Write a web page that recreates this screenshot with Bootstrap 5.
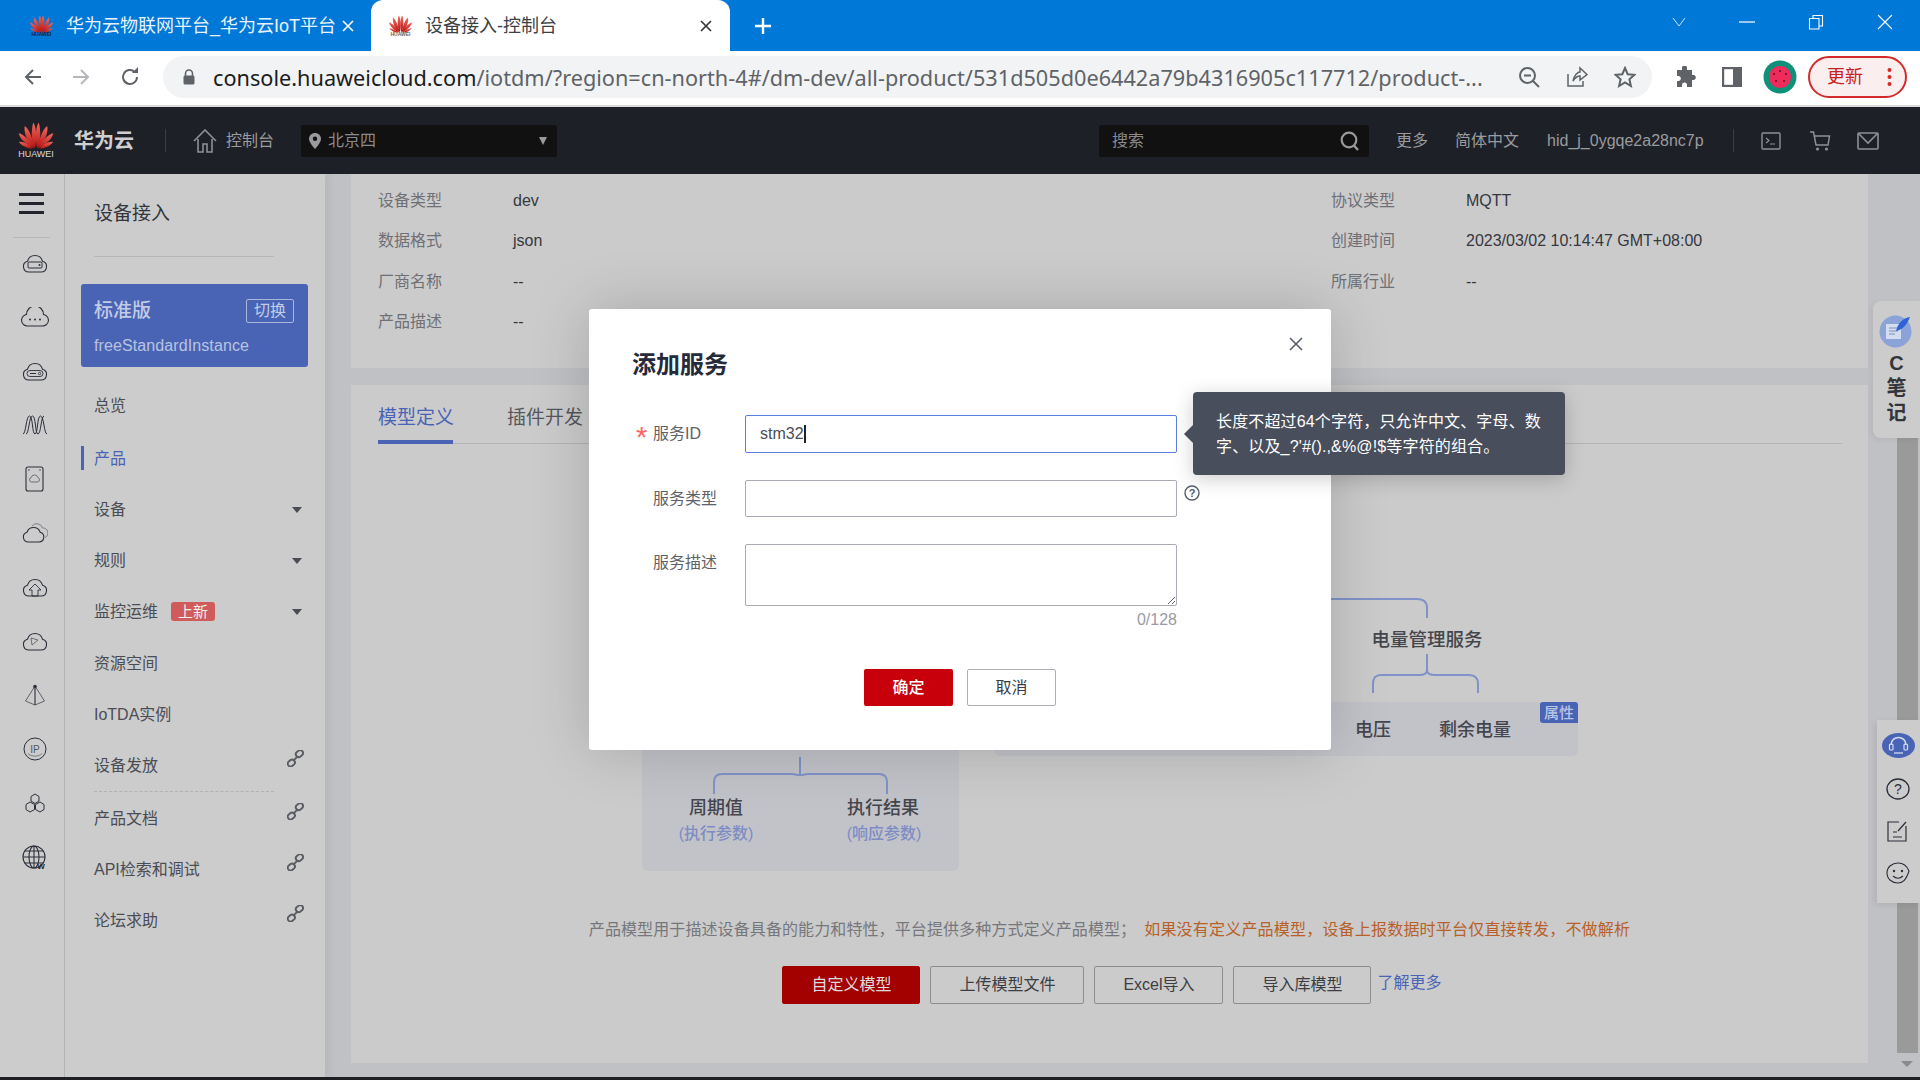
<!DOCTYPE html>
<html lang="zh-CN">
<head>
<meta charset="utf-8">
<title>设备接入-控制台</title>
<link href="https://cdn.jsdelivr.net/npm/bootstrap@5.3.0/dist/css/bootstrap.min.css" rel="stylesheet">
<style>
html,body{height:1080px;width:1920px;overflow:hidden;margin:0}
body{position:relative;font-family:"Liberation Sans","Noto Sans CJK SC",sans-serif;font-size:16px;color:#4b4d55;background:#c0c1c5}
svg{display:block;flex:none}
.tabstrip{height:51px;background:#0078d7;color:#fff;font-size:18px}
.btab{height:51px;display:flex;align-items:center;position:relative}
.btab-a{width:371px;padding-left:29px;color:#e8f2fb}
.btab-b{width:359px;padding-left:17px;background:#fff;color:#3c4043;border-radius:12px 12px 0 0}
.btab-t{margin-left:12px;white-space:nowrap;padding-top:2px}
.btab-a .btab-t{width:268px}
.btab-b .btab-t{width:271px}
.fav{display:flex;flex-direction:column;align-items:center;width:25px}
.fav-t{font-size:5px;line-height:5px;font-weight:700;color:#666;margin-top:-1px}
.btab-a .fav-t{color:#223}
.plus{margin-left:24px}
.winctl{margin-left:auto;padding-right:27px;gap:53px;padding-bottom:8px}
.toolbar{height:56px;background:#fff;border-bottom:2px solid #dcdcdc;padding:6px 12px 8px 24px;flex:none}
.omni{width:1489px;margin-left:23px;height:42px;background:#f1f3f4;border-radius:21px;padding:0 16px 0 19px;font-family:"Noto Sans",sans-serif;font-size:21.7px;color:#5f6368;white-space:nowrap}
.omni b{font-weight:400;color:#1c1c1c}
.url{margin-left:17px;width:1300px;flex:none;padding-top:2px}
.update{width:99px;height:42px;border:2px solid #d52a2a;border-radius:21px;background:#fbeeee;color:#c5221f;font-size:18px;padding:0 13px 0 17px}
.topbar{height:67px;background:#1e2027;color:#9a9b9f;flex:none;padding-left:18px}
.brand{font-size:20px;font-weight:700;color:#cfcfcf;margin-left:20px}
.hlogo{width:36px;color:#ddd;font-size:9px;line-height:10px;text-align:center}
.vsep{width:1px;height:23px;background:#3b3d44}
.selbox{width:256px;height:32px;background:#111;border-radius:2px;padding:0 10px 0 8px;margin-left:27px;color:#8a8a8c}
.selbox span.seltxt{margin-left:7px}
.searchbox{width:270px;height:32px;background:#111;border-radius:2px;padding:0 9px 0 13px;color:#8a8a8c}
.workarea{flex:1 1 auto;min-height:0}
.railbar{width:65px;background:#ccc;border-right:1px solid #b4b5b9;padding-top:19px;flex:none}
.ham{width:25px;margin-left:19px;height:21px;border-top:3px solid #23252e;border-bottom:3px solid #23252e;position:relative;display:flex;align-items:center}
.ham i{display:block;width:100%;height:3px;background:#23252e}
.railsep{height:1px;background:#b5b6b8;margin:23px 14px 0 13px}
.rico{height:54px;display:flex;align-items:center;justify-content:center;padding-left:5px}
.ricos{margin-top:-2px}
.sidenav{width:260px;background:#ccc;flex:none;box-shadow:4px 0 8px rgba(0,0,0,.05)}
.navhead{font-size:19px;color:#33353d;margin:0 51px 0 29px;height:83px;padding-top:26px;border-bottom:1px solid #b6b7b9}
.planbox{margin:27px 17px 0 16px;height:83px;background:#4a64b5;border-radius:3px;padding:13px 14px 0 13px;color:#c2cbe6}
.planname{font-size:19px;font-weight:500}
.planbtn{width:48px;height:24px;border:1px solid #aab6dc;border-radius:2px;font-size:16px;line-height:22px;text-align:center}
.planid{margin-top:10px;font-size:16px;line-height:20px;color:#b9c3e0;letter-spacing:.1px}
.navlist{margin:13px 0 0 0;padding:0;list-style:none}
.navitem{height:51px;display:flex;align-items:center;padding:0 19px 0 29px;position:relative}
.navitem.gap1{margin-bottom:2px}
.navitem.gap2{margin-top:1px}
.navitem.sel{color:#4a64b5}
.navitem.sel::before{content:"";position:absolute;left:16px;top:13px;width:3px;height:24px;background:#4a64b5}
.dash{height:0;border-top:1px dashed #b0b1b3;margin:0 51px 1px 29px}
.caretdn{margin-left:auto;width:0;height:0;border-left:5px solid transparent;border-right:5px solid transparent;border-top:6px solid #4a4c55;margin-right:4px}
.linkico{margin-left:auto;margin-top:-14px;margin-right:2px}
.newtag{background:#cf5b5b;color:#eee;font-size:15px;line-height:19px;width:44px;text-align:center;border-radius:3px;margin-left:13px}
.mainpane{flex:1 1 auto;padding:0 52px 0 26px;min-width:0}
.infocard{height:194px;background:#cbcbcb;padding:6.4px 0 0 27px}
.inforow{height:40.5px;display:flex;align-items:center}
.infocell{display:flex}
.infocell.l{width:953px}
.lab{width:135px;color:#6f7076}
.val{color:#35373e}
.modelcard{height:678px;margin-top:17px;background:#cbcbcb;padding:0 26px 0 0;position:relative}
.tabline{height:59px;margin-left:27px;border-bottom:1px solid #b4b5b7;gap:54px;font-size:19px;color:#55575e}
.tabitem{height:59px;padding-top:18px;line-height:30px}
.tabitem.sel{color:#4a64b5;border-bottom:4px solid #4a64b5;width:75px;white-space:nowrap}
.canvas{height:474px;position:relative;margin-right:-26px}
.dnode{position:absolute;transform:translateX(-50%);white-space:nowrap;font-weight:500;color:#44464e;font-size:18px;line-height:24px}
.dsub{position:absolute;transform:translateX(-50%);white-space:nowrap;font-weight:500;color:#7d8dc4;font-size:16px;line-height:22px}
.dbox{position:absolute;background:#c2c3c9;border-radius:6px}
.dbox1{left:291px;top:256px;width:317px;height:171px}
.dbox2{left:643px;top:258px;width:584px;height:54px}
.dtag{position:absolute;left:1189px;top:258px;width:38px;height:21px;background:#4a64b5;color:#b9c5e6;font-size:15px;line-height:21px;text-align:center;border-radius:3px 3px 0 3px;font-weight:500}
.dsvg{position:absolute;left:0;top:0}
.hinttext{height:24px;line-height:24px;text-align:center;margin-right:-26px;color:#76777d;letter-spacing:.1px}
.hinttext span{color:#b8612a;margin-left:8px;letter-spacing:.2px}
.btnrow{margin-top:24px;gap:10px;padding-left:5px;margin-right:-26px}
.pgbtn{height:38px;padding:0;background:transparent;border:1px solid #8c8d93;border-radius:2px;color:#3c3e45;font-size:16px}
.pgbtn.pri{background:#a30000;border-color:#a30000;color:#ddd}
.morelink{color:#4a64b5;margin-left:-4px;text-decoration:none;margin-top:-4px}
.dlg{position:absolute;left:589px;top:309px;width:742px;height:441px;background:#fff;border:0;border-radius:3px;box-shadow:0 0 60px rgba(0,0,0,.18);padding:0 0 0 43px;color:#5a5c64}
.dlgclose{position:absolute;left:700px;top:28px}
.dlgtitle{font-size:24px;font-weight:700;color:#252b3a;line-height:32px;margin:40px 0 0 0}
.frow{display:flex;margin-top:27px}
.frow.first{margin-top:34px}
.flab{width:113px;display:flex;padding-top:6px;height:32px;line-height:26px;color:#5f6168;flex:none}
.flab.ind{padding-left:21px}
.fstar{width:21px;padding-left:4px;color:#f66;font-size:29px;line-height:33px;height:26px}
.fctl{width:432px;height:37px;border:1px solid #a9aab3;border-radius:2px;font-size:16px;padding:0 14px;color:#4b4d55;box-shadow:none}
.fctl.focus{height:38px;border-color:#5b7fdd;display:flex;align-items:center}
.caretbar{width:2px;height:18px;background:#1f2330}
.fctl.ta{height:62px;resize:both;padding:6px 14px}
.counter{width:432px;margin-left:113px;text-align:right;color:#9a9ba1;line-height:20px;margin-top:4px}
.helpq{margin:5px 0 0 7px}
.dlgbtns{gap:14px;margin:39px 0 0 232px}
.dbtn{width:89px;height:37px;padding:0;border-radius:2px;font-size:16px;line-height:1}
.dbtn.ok{background:#c7000b;border:0;color:#fff;font-weight:500}
.dbtn.no{background:#fff;border:1px solid #adb0b8;color:#3a3c43}
.tipbox{position:absolute;left:604px;top:83px;width:372px;height:83px;background:#494e5c;border-radius:4px;color:#fff;font-size:16px;line-height:25px;padding:17px 0 0 23px;box-shadow:0 4px 20px rgba(0,0,0,.2);white-space:nowrap;letter-spacing:.15px}
.tipbox::before{content:"";position:absolute;left:-9px;top:33px;border-top:9px solid transparent;border-bottom:9px solid transparent;border-right:9px solid #494e5c}
.sbar{position:absolute;left:1897px;top:420px;width:21px;height:633px;background:#9a9a9a}
.sarrow{position:absolute;left:1901px;top:1061px;border-left:6px solid transparent;border-right:6px solid transparent;border-top:6px solid #8a8a8a}
.notepanel{position:absolute;left:1873px;top:301px;width:47px;height:137px;background:#ccc;border-radius:8px 0 0 8px;padding:14px 0 0 0;text-align:center;color:#33353a;font-weight:700;font-size:20px;line-height:25px;box-shadow:-2px 2px 6px rgba(0,0,0,.05)}
.notepanel svg{margin:0 auto 3px 6px}
.helppanel{position:absolute;left:1877px;top:720px;width:43px;height:183px;background:#ccc;box-shadow:-2px 2px 6px rgba(0,0,0,.08);padding:13px 0 0 5px;display:flex;flex-direction:column;gap:20px}
.taskstrip{height:3px;background:#1e1f22;flex:none}
</style>
</head>
<body class="d-flex flex-column">
<svg width="0" height="0" style="position:absolute">
  <defs>
    <linearGradient id="pg" x1="0" y1="0" x2="0" y2="1"><stop offset="0" stop-color="#f0695f"/><stop offset="1" stop-color="#b5110f"/></linearGradient>
    <symbol id="petals" viewBox="0 0 100 76">
      <g fill="url(#pg)">
        <path id="p0" d="M47 74C36 56 36 24 42 2C50 8 54 44 47 74Z"/>
        <path d="M53 74C64 56 64 24 58 2C50 8 46 44 53 74Z"/>
        <path d="M45 74C28 60 15 34 18 12C28 14 42 48 45 74Z"/>
        <path d="M55 74C72 60 85 34 82 12C72 14 58 48 55 74Z"/>
        <path d="M43 74C24 66 6 50 1 32C14 32 34 56 43 74Z"/>
        <path d="M57 74C76 66 94 50 99 32C86 32 66 56 57 74Z"/>
        <path d="M40 75C26 74 10 68 2 56C14 54 30 64 40 75Z"/>
        <path d="M60 75C74 74 90 68 98 56C86 54 70 64 60 75Z"/>
      </g>
    </symbol>
    <symbol id="chain" viewBox="0 0 18 18"><g fill="none" stroke="#5a5c64" stroke-width="2"><rect x="9.2" y="1" width="8" height="6" rx="3" transform="rotate(-40 13 4)"/><rect x=".8" y="10.6" width="8" height="6" rx="3" transform="rotate(-40 5 14)"/><path d="M6.500 11.500L11.500 6.500"/></g></symbol>
  </defs>
</svg>

<div class="tabstrip d-flex flex-none">
  <div class="btab btab-a"><div class="fav"><svg width="25" height="18"><use href="#petals"/></svg><span class="fav-t">HUAWEI</span></div><div class="btab-t">华为云物联网平台_华为云IoT平台</div>
    <svg class="ms-2" width="12" height="12" viewBox="0 0 12 12"><path d="M1 1L11 11M11 1L1 11" stroke="#fff" stroke-width="1.6"/></svg></div>
  <div class="btab btab-b"><div class="fav"><svg width="25" height="18"><use href="#petals"/></svg><span class="fav-t">HUAWEI</span></div><div class="btab-t">设备接入-控制台</div>
    <svg class="ms-1" width="12" height="12" viewBox="0 0 12 12"><path d="M1 1L11 11M11 1L1 11" stroke="#333" stroke-width="1.6"/></svg></div>
  <div class="plus d-flex align-items-center"><svg width="18" height="18" viewBox="0 0 18 18"><path d="M9 1V17M1 9H17" stroke="#fff" stroke-width="2.4"/></svg></div>
  <div class="winctl d-flex align-items-center">
    <svg width="14" height="10" viewBox="0 0 14 10"><path d="M1 1L7 9L13 1" fill="none" stroke="#cfe4f6" stroke-width="1"/></svg>
    <svg width="16" height="2" viewBox="0 0 16 2"><path d="M0 1H16" stroke="#fff" stroke-width="1.2"/></svg>
    <svg width="16" height="16" viewBox="0 0 16 16"><path d="M1.500 4.500H11V15H1.500ZM5 4.500V1.500H14.500V12H11" fill="none" stroke="#fff" stroke-width="1.1"/></svg>
    <svg width="16" height="16" viewBox="0 0 16 16"><path d="M1 1L15 15M15 1L1 15" stroke="#fff" stroke-width="1.1"/></svg>
  </div>
</div>

<div class="toolbar d-flex align-items-center">
  <svg width="18" height="18" viewBox="0 0 18 18"><path d="M17 9H2M9 2L2 9L9 16" fill="none" stroke="#5f6368" stroke-width="2"/></svg>
  <svg style="margin-left:30px" width="18" height="18" viewBox="0 0 18 18"><path d="M1 9H16M9 2L16 9L9 16" fill="none" stroke="#b5b7ba" stroke-width="2"/></svg>
  <svg style="margin-left:30px" width="20" height="20" viewBox="0 0 20 20"><path d="M17 10A7 7 0 1 1 14.800 4.900" fill="none" stroke="#5f6368" stroke-width="2"/><path d="M12 6H18V0Z" fill="#5f6368"/></svg>
  <div class="omni d-flex align-items-center">
    <svg width="14" height="16" viewBox="0 0 14 16"><path d="M3.500 7V4.500a3.500 3.500 0 0 1 7 0V7" fill="none" stroke="#5f6368" stroke-width="1.6"/><rect x="1.500" y="6.500" width="11" height="9" rx="1.500" fill="#5f6368"/></svg>
    <div class="url"><b>console.huaweicloud.com</b>/iotdm/?region=cn-north-4#/dm-dev/all-product/531d505d0e6442a79b4316905c117712/product-...</div>
    <svg style="margin-left:5px" width="22" height="22" viewBox="0 0 22 22"><circle cx="9.500" cy="9.500" r="7.500" fill="none" stroke="#5f6368" stroke-width="2"/><path d="M15 15L21 21" stroke="#5f6368" stroke-width="2"/><path d="M6 9.500H13" stroke="#5f6368" stroke-width="2"/></svg>
    <svg style="margin-left:26px" width="22" height="22" viewBox="0 0 22 22"><path d="M2 8V20H17V15M7 15C8 9 12 6 14 6V2L21 8.500L14 14V10C11 10 9 12 7 15Z" fill="none" stroke="#5f6368" stroke-width="1.500"/></svg>
    <svg style="margin-left:26px" width="22" height="22" viewBox="0 0 22 22"><path d="M11 2L13.700 8.200L20.500 8.800L15.400 13.300L16.900 20L11 16.500L5.100 20L6.600 13.300L1.500 8.800L8.300 8.200Z" fill="none" stroke="#5f6368" stroke-width="2"/></svg>
  </div>
  <svg style="margin-left:22px" width="22" height="22" viewBox="0 0 22 22"><path d="M8 2a2.500 2.500 0 0 1 5 0V4H18V9H20a2.600 2.600 0 0 1 0 5H18V21H13V19a2.500 2.500 0 0 0-5 0V21H3V15H5a2.600 2.600 0 0 0 0-5H3V4H8Z" fill="#5f6368"/></svg>
  <svg style="margin-left:26px" width="20" height="20" viewBox="0 0 20 20"><rect x="1" y="1" width="18" height="18" fill="none" stroke="#5f6368" stroke-width="2.400"/><rect x="11" y="1" width="8" height="18" fill="#5f6368"/></svg>
  <svg style="margin-left:21px" width="34" height="34" viewBox="0 0 34 34"><circle cx="17" cy="17" r="16.500" fill="#0e9079"/><circle cx="17" cy="17" r="11" fill="#ef2b5c"/><g fill="#5a1020"><circle cx="11" cy="14" r="1"/><circle cx="17" cy="11" r="1"/><circle cx="23" cy="14" r="1"/><circle cx="13" cy="21" r="1"/><circle cx="21" cy="21" r="1"/></g></svg>
  <div class="update d-flex align-items-center justify-content-between" style="margin-left:11px"><span>更新</span><svg width="5" height="20" viewBox="0 0 5 20"><g fill="#d52a2a"><circle cx="2.500" cy="3" r="2"/><circle cx="2.500" cy="10" r="2"/><circle cx="2.500" cy="17" r="2"/></g></svg></div>
</div>

<div class="topbar d-flex align-items-center">
  <div class="hlogo"><svg width="36" height="27"><use href="#petals"/></svg>HUAWEI</div>
  <div class="brand">华为云</div>
  <div class="vsep" style="margin:0 27px 0 31px"></div>
  <svg width="24" height="24" viewBox="0 0 24 24"><path d="M1 12L12 1L23 12M5 10V23H10V15H14V23H19V10" fill="none" stroke="#8f9095" stroke-width="1.600"/></svg>
  <span style="margin-left:9px">控制台</span>
  <div class="selbox d-flex align-items-center"><svg width="12" height="16" viewBox="0 0 12 16"><path d="M6 0C2.700 0 0 2.600 0 5.800C0 10 6 16 6 16S12 10 12 5.800C12 2.600 9.300 0 6 0Z" fill="#9a9a9c"/><circle cx="6" cy="5.800" r="2.200" fill="#111"/></svg><span class="seltxt">北京四</span><span class="caretdn" style="border-top-color:#9a9a9c;border-top-width:8px;border-left-width:4px;border-right-width:4px;margin-right:0"></span></div>
  <div class="searchbox d-flex align-items-center justify-content-between" style="margin-left:542px"><span>搜索</span><svg width="20" height="20" viewBox="0 0 20 20"><circle cx="9" cy="9" r="7.300" fill="none" stroke="#9a9a9c" stroke-width="2.200"/><path d="M13.500 14L18 19" stroke="#9a9a9c" stroke-width="2.400"/></svg></div>
  <span style="margin-left:27px">更多</span>
  <span style="margin-left:27px">简体中文</span>
  <span style="margin-left:28px;width:159px;white-space:nowrap">hid_j_0ygqe2a28nc7p</span>
  <div class="vsep" style="margin-left:27px"></div>
  <svg style="margin-left:27px" width="20" height="18" viewBox="0 0 20 18"><rect x="1" y="1" width="18" height="16" rx="1" fill="none" stroke="#8f9095" stroke-width="1.400"/><path d="M5 6L8 8.500L5 11M9 12H14" fill="none" stroke="#8f9095" stroke-width="1.200"/></svg>
  <svg style="margin-left:28px" width="22" height="20" viewBox="0 0 22 20"><path d="M1 1H4.500L7 14H19L20.500 5H5" fill="none" stroke="#8f9095" stroke-width="1.500"/><circle cx="8.500" cy="18" r="1.600" fill="#8f9095"/><circle cx="17.500" cy="18" r="1.600" fill="#8f9095"/></svg>
  <svg style="margin-left:26px" width="22" height="18" viewBox="0 0 22 18"><rect x="1" y="1" width="20" height="16" rx="1" fill="none" stroke="#8f9095" stroke-width="1.600"/><path d="M1 1L11 11L21 1" fill="none" stroke="#8f9095" stroke-width="1.600"/></svg>
</div>

<div class="workarea d-flex">
  <div class="railbar">
    <div class="ham"><i></i></div>
    <div class="railsep"></div>
    <div class="ricos">
    <div class="rico"><svg width="26" height="20" viewBox="0 0 26 20"><path d="M7 19H19a5.500 5.500 0 0 0 1.500-10.800A7.800 7.800 0 0 0 5.500 8.200A5.500 5.500 0 0 0 7 19Z" fill="none" stroke="#2c2f3a" stroke-width="1.100"/><rect x="6" y="9" width="14" height="6" rx="1" fill="none" stroke="#2c2f3a"/><circle cx="17.500" cy="12" r="1" fill="#2c2f3a"/></svg></div>
    <div class="rico"><svg width="28" height="20" viewBox="0 0 28 20"><path d="M7 19H21a5.800 5.800 0 0 0 1.500-11.500A8.500 8.500 0 0 0 5.500 7.500A5.800 5.800 0 0 0 7 19Z" fill="none" stroke="#2c2f3a" stroke-width="1.100"/><g fill="#2c2f3a"><circle cx="9" cy="12.500" r="1"/><circle cx="14" cy="12.500" r="1"/><circle cx="19" cy="12.500" r="1"/></g></svg></div>
    <div class="rico"><svg width="26" height="20" viewBox="0 0 26 20"><path d="M7 19H19a5.500 5.500 0 0 0 1.500-10.800A7.800 7.800 0 0 0 5.500 8.200A5.500 5.500 0 0 0 7 19Z" fill="none" stroke="#2c2f3a" stroke-width="1.100"/><rect x="5" y="9.500" width="16" height="6" rx="3" fill="none" stroke="#2c2f3a" stroke-width=".9"/><path d="M8 12.500H14" stroke="#2c2f3a"/><circle cx="17.500" cy="12.500" r="1.200" fill="none" stroke="#2c2f3a" stroke-width=".8"/></svg></div>
    <div class="rico"><svg width="26" height="20" viewBox="0 0 26 20"><path d="M1 19C4 19 4 1 7.500 1S10 19 13 19 15 1 18.500 1 22 19 25 19M4 19C7 19 7 1 10.500 1S13 19 16 19 19 1 22 1" fill="none" stroke="#2c2f3a" stroke-width="1"/></svg></div>
    <div class="rico"><svg width="19" height="26" viewBox="0 0 19 26"><rect x="1" y="1" width="17" height="24" rx="2" fill="none" stroke="#2c2f3a" stroke-width="1.100"/><circle cx="4" cy="4" r=".7" fill="#2c2f3a"/><circle cx="15" cy="4" r=".7" fill="#2c2f3a"/><path d="M6.500 16H12.500a2.300 2.300 0 0 0 .3-4.500A3.400 3.400 0 0 0 6.200 11.500A2.300 2.300 0 0 0 6.500 16Z" fill="none" stroke="#55575f" stroke-width=".8"/></svg></div>
    <div class="rico"><svg width="26" height="20" viewBox="0 0 26 20"><path d="M6.500 19H17a5 5 0 0 0 1.200-9.800A7 7 0 0 0 5 9.200A5 5 0 0 0 6.500 19Z" fill="none" stroke="#2c2f3a" stroke-width="1.100"/><path d="M10 3A6 6 0 0 1 20.500 5A5 5 0 0 1 23 14.500" fill="none" stroke="#6a6c74" stroke-width=".8"/></svg></div>
    <div class="rico"><svg width="26" height="20" viewBox="0 0 26 20"><path d="M7 19H19a5.500 5.500 0 0 0 1.500-10.800A7.800 7.800 0 0 0 5.500 8.200A5.500 5.500 0 0 0 7 19Z" fill="none" stroke="#2c2f3a" stroke-width="1.100"/><path d="M13 7L19 13H16V19H10V13H7Z" fill="none" stroke="#2c2f3a" stroke-width=".9"/></svg></div>
    <div class="rico"><svg width="26" height="20" viewBox="0 0 26 20"><path d="M7 19H19a5.500 5.500 0 0 0 1.500-10.800A7.800 7.800 0 0 0 5.500 8.200A5.500 5.500 0 0 0 7 19Z" fill="none" stroke="#2c2f3a" stroke-width="1.100"/><path d="M9 7L16 9L10 14Z" fill="none" stroke="#55575f" stroke-width=".8"/></svg></div>
    <div class="rico"><svg width="22" height="22" viewBox="0 0 22 22"><path d="M11 2L1.500 17L11 21L20.500 17Z" fill="none" stroke="#55575f" stroke-width=".9"/><path d="M11 2V21" stroke="#2c2f3a" stroke-width="1.100"/><circle cx="11" cy="2.500" r="1.800" fill="#2c2f3a"/></svg></div>
    <div class="rico"><svg width="24" height="24" viewBox="0 0 24 24"><circle cx="12" cy="12" r="11" fill="none" stroke="#2c2f3a" stroke-width="1"/><text x="12" y="15.500" text-anchor="middle" font-size="10" font-family="Liberation Sans" fill="#55575f">IP</text><path d="M5 16.500C8 20 16 20 19 16.500" fill="none" stroke="#55575f" stroke-width=".7"/></svg></div>
    <div class="rico"><svg width="22" height="22" viewBox="0 0 22 22"><g fill="none" stroke="#2c2f3a" stroke-width="1"><path d="M7 4.500L11 2L15 4.500V9L11 11.500L7 9Z"/><path d="M2 12.500L6 10L10.500 12.500V17.500L6 20L2 17.500Z"/><path d="M11.500 12.500L16 10L20 12.500V17.500L16 20L11.500 17.500Z"/></g></svg></div>
    <div class="rico"><svg width="25" height="25" viewBox="0 0 25 25"><g fill="none" stroke="#2c2f3a" stroke-width="1.100"><circle cx="12" cy="12" r="11"/><ellipse cx="12" cy="12" rx="5" ry="11"/><path d="M1 12H23M3 6H21M3 18H21M12 1V23"/></g><text x="19" y="24" text-anchor="middle" font-size="8" font-weight="700" font-family="Liberation Sans" fill="#23252e">W</text></svg></div>
    </div>
  </div>

  <div class="sidenav">
    <div class="navhead">设备接入</div>
    <div class="planbox">
      <div class="d-flex justify-content-between align-items-center"><span class="planname">标准版</span><span class="planbtn">切换</span></div>
      <div class="planid">freeStandardInstance</div>
    </div>
    <ul class="navlist">
      <li class="navitem gap1">总览</li>
      <li class="navitem sel">产品</li>
      <li class="navitem">设备<span class="caretdn"></span></li>
      <li class="navitem">规则<span class="caretdn"></span></li>
      <li class="navitem">监控运维<span class="newtag">上新</span><span class="caretdn"></span></li>
      <li class="navitem gap2">资源空间</li>
      <li class="navitem">IoTDA实例</li>
      <li class="navitem">设备发放<svg class="linkico" width="17" height="17"><use href="#chain"/></svg></li>
      <li class="dash"></li>
      <li class="navitem">产品文档<svg class="linkico" width="17" height="17"><use href="#chain"/></svg></li>
      <li class="navitem">API检索和调试<svg class="linkico" width="17" height="17"><use href="#chain"/></svg></li>
      <li class="navitem">论坛求助<svg class="linkico" width="17" height="17"><use href="#chain"/></svg></li>
    </ul>
  </div>

  <div class="mainpane">
    <div class="infocard">
      <div class="inforow"><div class="infocell l"><span class="lab">设备类型</span><span class="val">dev</span></div><div class="infocell"><span class="lab">协议类型</span><span class="val">MQTT</span></div></div>
      <div class="inforow"><div class="infocell l"><span class="lab">数据格式</span><span class="val">json</span></div><div class="infocell"><span class="lab">创建时间</span><span class="val">2023/03/02 10:14:47 GMT+08:00</span></div></div>
      <div class="inforow"><div class="infocell l"><span class="lab">厂商名称</span><span class="val">--</span></div><div class="infocell"><span class="lab">所属行业</span><span class="val">--</span></div></div>
      <div class="inforow"><div class="infocell l"><span class="lab">产品描述</span><span class="val">--</span></div></div>
    </div>
    <div class="modelcard">
      <div class="tabline d-flex"><div class="tabitem sel">模型定义</div><div class="tabitem">插件开发</div></div>
      <div class="canvas">
        <div class="dbox dbox1"></div>
        <div class="dbox dbox2"></div>
        <div class="dtag">属性</div>
        <svg class="dsvg" width="1517" height="474" viewBox="0 0 1517 474"><g fill="none" stroke="#8192c8" stroke-width="2">
          <path d="M449 313V329C449 333 446 330 441 330H371C366 330 363 333 363 338V350M449 329C449 333 452 330 457 330H528C533 330 536 333 536 338V350"/>
          <path d="M900 155H1066C1072 155 1076 158 1076 164V174"/>
          <path d="M1076 210V226C1076 230 1072 231 1068 231H1030C1024 231 1022 234 1022 240V249M1076 226C1076 230 1080 231 1084 231H1118C1124 231 1127 234 1127 240V249"/>
        </g></svg>
        <div class="dnode" style="left:1076px;top:184px;font-size:18.5px">电量管理服务</div>
        <div class="dnode" style="left:1022px;top:274px">电压</div>
        <div class="dnode" style="left:1124px;top:274px">剩余电量</div>
        <div class="dnode" style="left:365px;top:352px">周期值</div>
        <div class="dnode" style="left:532px;top:352px">执行结果</div>
        <div class="dsub" style="left:365px;top:379px">(执行参数)</div>
        <div class="dsub" style="left:533px;top:379px">(响应参数)</div>
      </div>
      <div class="hinttext">产品模型用于描述设备具备的能力和特性，平台提供多种方式定义产品模型；<span>如果没有定义产品模型，设备上报数据时平台仅直接转发，不做解析</span></div>
      <div class="btnrow d-flex justify-content-center align-items-center">
        <button type="button" class="btn pgbtn pri" style="width:138px">自定义模型</button>
        <button type="button" class="btn pgbtn" style="width:154px">上传模型文件</button>
        <button type="button" class="btn pgbtn" style="width:129px">Excel导入</button>
        <button type="button" class="btn pgbtn" style="width:138px">导入库模型</button>
        <a class="morelink" href="#">了解更多</a>
      </div>
    </div>
  </div>
</div>
<div class="taskstrip"></div>

<div class="sbar"></div>
<div class="sarrow"></div>
<div class="notepanel">
  <svg width="33" height="33" viewBox="0 0 33 33"><circle cx="16.500" cy="16.500" r="16" fill="#8ba3d8"/><path d="M7 9H22V24H7Z" fill="#d4dcf0"/><path d="M10 13H19M10 16H19M10 19H16" stroke="#7b8dbb" stroke-width="1.200"/><path d="M31 2C24 3 19 8 17 16C23 15 28 10 31 2Z" fill="#2f62d6"/></svg>
  C<br>笔<br>记
</div>
<div class="helppanel">
  <svg width="33" height="25" viewBox="0 0 33 25"><ellipse cx="16.500" cy="12.500" rx="16.500" ry="12.500" fill="#4a64b5"/><path d="M9 12C9 2 24 2 24 12" fill="none" stroke="#d6dcef" stroke-width="1.500"/><rect x="7.500" y="11" width="3.500" height="6" rx="1" fill="none" stroke="#d6dcef" stroke-width="1.200"/><rect x="22" y="11" width="3.500" height="6" rx="1" fill="none" stroke="#d6dcef" stroke-width="1.200"/><path d="M12 20H21" stroke="#d6dcef" stroke-width="1.300"/></svg>
  <svg class="ms-1" width="24" height="22" viewBox="0 0 24 22"><ellipse cx="12" cy="11" rx="11" ry="10" fill="none" stroke="#2c2f3a" stroke-width="1.300"/><text x="12" y="16" text-anchor="middle" font-size="14" font-family="Liberation Sans" fill="#2c2f3a">?</text></svg>
  <svg class="ms-1" width="22" height="22" viewBox="0 0 22 22"><path d="M13 2H2V21H20V6" fill="none" stroke="#2c2f3a" stroke-width="1.200"/><path d="M7 12H11M7 17H16M12 11L20 2" fill="none" stroke="#2c2f3a" stroke-width="1.200"/></svg>
  <svg class="ms-1" width="24" height="22" viewBox="0 0 24 22"><path d="M23 9C21 4 17 1 12 1C6 1 1 5 1 11S6 21 12 21C17 21 20 18 23 9Z" fill="none" stroke="#2c2f3a" stroke-width="1.100"/><circle cx="8" cy="9" r="1.200" fill="#2c2f3a"/><circle cx="16" cy="9" r="1.200" fill="#2c2f3a"/><path d="M7 14C10 17 14 17 17 14" fill="none" stroke="#2c2f3a" stroke-width="1.100"/></svg>
</div>

<div class="modal-content dlg">
  <svg class="dlgclose" width="14" height="14" viewBox="0 0 14 14"><path d="M1 1L13 13M13 1L1 13" stroke="#575d6c" stroke-width="1.600"/></svg>
  <div class="dlgtitle">添加服务</div>
  <div class="frow first">
    <div class="flab"><span class="fstar">*</span>服务ID</div>
    <div class="form-control fctl focus"><span>stm32</span><span class="caretbar"></span></div>
  </div>
  <div class="frow">
    <div class="flab ind">服务类型</div>
    <input class="form-control fctl" type="text" aria-label="服务类型">
    <svg class="helpq" width="16" height="16" viewBox="0 0 16 16"><circle cx="8" cy="8" r="7" fill="none" stroke="#575d6c" stroke-width="1.400"/><text x="8" y="12" text-anchor="middle" font-size="11" font-weight="700" font-family="Liberation Sans" fill="#575d6c">?</text></svg>
  </div>
  <div class="frow">
    <div class="flab ind">服务描述</div>
    <textarea class="form-control fctl ta" aria-label="服务描述"></textarea>
  </div>
  <div class="counter">0/128</div>
  <div class="dlgbtns d-flex">
    <button type="button" class="btn dbtn ok">确定</button>
    <button type="button" class="btn dbtn no">取消</button>
  </div>
  <div class="tipbox">长度不超过64个字符，只允许中文、字母、数<br>字、以及_?'#().,&amp;%@!$等字符的组合。</div>
</div>

</body>
</html>
